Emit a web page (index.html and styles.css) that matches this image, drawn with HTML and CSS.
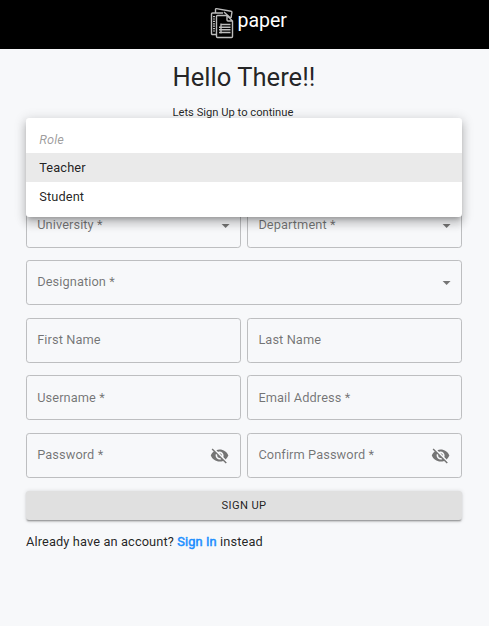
FILE: index.html
```
<!DOCTYPE html>
<html lang="en">
<head>
<meta charset="utf-8">
<title>paper</title>
<link rel="stylesheet" href="styles.css">
</head>
<body>
<svg class="defs" aria-hidden="true">
  <symbol id="eye-off" viewBox="0 0 24 24"><path d="M12 7c2.76 0 5 2.24 5 5 0 .65-.13 1.26-.36 1.83l2.92 2.92c1.51-1.26 2.7-2.89 3.43-4.75-1.73-4.39-6-7.5-11-7.5-1.4 0-2.74.25-3.98.7l2.16 2.16C10.74 7.13 11.35 7 12 7zM2 4.27l2.28 2.28.46.46C3.08 8.3 1.78 10.02 1 12c1.73 4.39 6 7.5 11 7.5 1.55 0 3.03-.3 4.38-.84l.42.42L19.73 22 21 20.73 3.27 3 2 4.27zM7.53 9.8l1.55 1.55c-.05.21-.08.43-.08.65 0 1.66 1.34 3 3 3 .22 0 .44-.03.65-.08l1.55 1.55c-.67.33-1.41.53-2.2.53-2.76 0-5-2.24-5-5 0-.79.2-1.53.53-2.2zm4.31-.78l3.15 3.15.02-.16c0-1.66-1.34-3-3-3l-.17.01z"/></symbol>
  <symbol id="caret" viewBox="0 0 24 24"><path d="M7 10l5 5 5-5z"/></symbol>
</svg>
<header class="bar">
  <svg class="logo" viewBox="0 0 24 32">
    <path d="M6.5 27.500H2.500a1 1 0 0 1-1-1V7a1 1 0 0 1 1-1H13M5.500 5.500V2.500a.9.9 0 0 1 1-.9L21 4.200a1 1 0 0 1 .9 1.200L21 11M14 5l6.500 6"/>
    <path d="M17 8.500H7.500a1 1 0 0 0-1 1v20a1 1 0 0 0 1 1h14a1 1 0 0 0 1-1v-15.500zM17 8.500v4.500a1 1 0 0 0 1 1h4.500"/>
    <path d="M11 17.500h9.500M9 20.200h11.500M9 22.800h11.500M9 25.500h11.500M11 16.500v10"/>
    <path class="ticks" d="M4 9v16"/>
  </svg>
  <span class="brand">paper</span>
</header>
<main class="page">
  <div class="intro">
    <h1>Hello There!!</h1>
    <p>Lets Sign Up to continue</p>
  </div>
  <form class="form">
    <div class="role">
      <div class="menu">
        <div class="item hint">Role</div>
        <div class="item active">Teacher</div>
        <div class="item">Student</div>
      </div>
    </div>
    <div class="field"><label>University *</label><svg class="caret"><use href="#caret"/></svg></div>
    <div class="field"><label>Department *</label><svg class="caret"><use href="#caret"/></svg></div>
    <div class="field wide"><label>Designation *</label><svg class="caret"><use href="#caret"/></svg></div>
    <div class="field"><label>First Name</label></div>
    <div class="field"><label>Last Name</label></div>
    <div class="field"><label>Username *</label></div>
    <div class="field"><label>Email Address *</label></div>
    <div class="field"><label>Password *</label><svg class="eye"><use href="#eye-off"/></svg></div>
    <div class="field"><label>Confirm Password *</label><svg class="eye"><use href="#eye-off"/></svg></div>
    <button class="submit" type="button">SIGN UP</button>
  </form>
  <p class="switch">Already have an account? <a>Sign In</a> instead</p>
</main>
</body>
</html>
```
FILE: styles.css
```
* { box-sizing: border-box; }
body {
  margin: 0;
  min-height: 626px;
  background: #f7f8fa;
  color: rgba(0, 0, 0, .87);
  font: 12.8px/19.2px Roboto, sans-serif;
  letter-spacing: .12px;
}
.defs { position: absolute; width: 0; height: 0; }
.bar {
  display: flex;
  justify-content: center;
  height: 49px;
  padding: 7px 0 0 8px;
  background: #000;
  color: #fff;
}
.logo { width: 24px; height: 32px; margin-right: 3.5px; fill: none; stroke: #bdbdbd; stroke-width: 1.4; }
.logo .ticks { stroke-width: 2; stroke-dasharray: 1.2 1.2; }
.brand { font-size: 19.5px; line-height: 27px; letter-spacing: 0; }
.page { padding: 11px 27px 0 26px; }
.intro { width: 143px; margin: 0 auto; }
.intro h1 { margin: 0; font-size: 25.6px; font-weight: 400; line-height: 34px; letter-spacing: 0; white-space: nowrap; }
.intro p { margin: 11px 0 0; font-size: 11.2px; line-height: 16px; letter-spacing: 0; }
.form {
  display: grid;
  grid-template-columns: 1fr 1fr;
  gap: 12.75px 6.4px;
  margin-top: 24.2px;
}
.role { position: relative; grid-column: 1 / -1; height: 44.8px; }
.menu {
  position: absolute;
  z-index: 1;
  top: -27.2px;
  left: 0;
  right: 0;
  padding: 6.4px 0;
  border-radius: 3.2px;
  background: #fff;
  box-shadow: 0 4px 4px -2.4px rgba(0, 0, 0, .2), 0 6.4px 8px .8px rgba(0, 0, 0, .14), 0 2.4px 11.2px 1.6px rgba(0, 0, 0, .12);
}
.item { height: 28.8px; padding: 4.8px 13.2px; }
.item.hint { padding-top: 5.4px; color: rgba(0, 0, 0, .4); font-style: italic; }
.item.active { background: #eaeaea; }
.field {
  display: flex;
  align-items: center;
  justify-content: space-between;
  height: 44.8px;
  padding: 0 9.6px 0 10.2px;
  border: 1px solid #bdbec0;
  border-radius: 3.2px;
}
.field.wide { grid-column: 1 / -1; }
.field label { padding-bottom: 1.3px; color: rgba(0, 0, 0, .54); letter-spacing: .09px; }
.caret { width: 19.2px; height: 19.2px; margin-right: -4.6px; fill: #757575; }
.eye { width: 19.2px; height: 19.2px; margin-right: 1.4px; fill: #757575; }
.submit {
  grid-column: 1 / -1;
  height: 28.8px;
  margin-top: .4px;
  padding: .6px 0 0;
  border: 0;
  border-radius: 3.2px;
  background: #e0e0e0;
  color: rgba(0, 0, 0, .87);
  font: 400 11.2px/19.6px Roboto, sans-serif;
  letter-spacing: .35px;
  box-shadow: 0 2.4px .8px -1.6px rgba(0, 0, 0, .2), 0 1.6px 1.6px rgba(0, 0, 0, .14), 0 .8px 4px rgba(0, 0, 0, .12);
}
.switch { margin: 12.4px 0 0; }
.switch a { color: #1e90ff; -webkit-text-stroke: .5px #1e90ff; }
```
